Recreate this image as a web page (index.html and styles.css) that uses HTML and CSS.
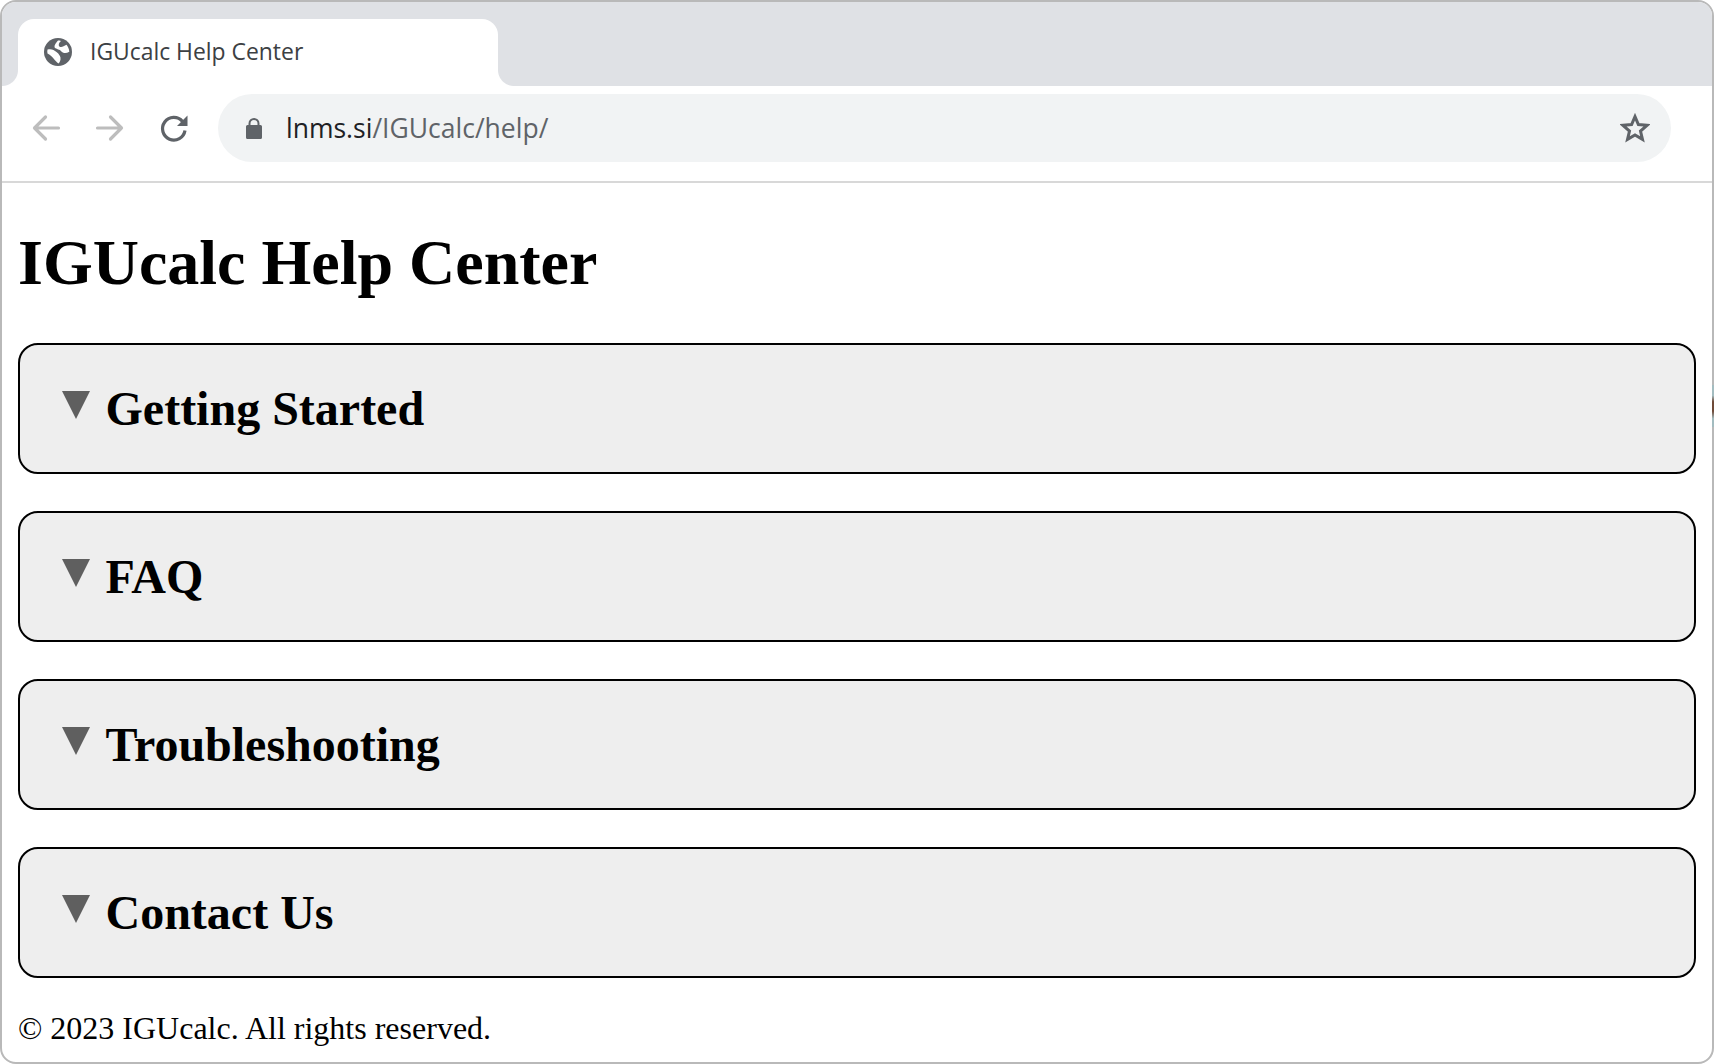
FILE: index.html
```html
<!DOCTYPE html>
<html lang="en">
<head>
<meta charset="utf-8">
<title>IGUcalc Help Center</title>
<link rel="stylesheet" href="styles.css">
</head>
<body>
<div class="window">
  <div class="tabstrip">
    <div class="tab">
      <svg class="favicon" viewBox="0 0 28 28" aria-hidden="true">
        <circle cx="14" cy="14" r="14" fill="#5f6368"/>
        <path fill="#fff" d="M3.500 11.500C7.500 10.500 10 12 12.500 14C15 16 17 18.500 16.500 21.500C16.300 23 15.500 24.500 14.500 25.500C11 23 8.500 18 3.500 15.500C3.200 14 3.200 12.800 3.500 11.500Z"/>
        <path fill="#fff" d="M14 2.500C12.500 4.500 10 7 10.500 9C11 11 15 11 17 13C19 15.500 22 15.800 25.300 13.800C25.200 11 24 8.800 22.500 6.800C19.500 8.500 17.300 10 15.300 8.500C14 7 15 4.500 17 2.900C16 2.600 15 2.500 14 2.500Z"/>
      </svg>
      <span class="tab-title">IGUcalc Help Center</span>
    </div>
  </div>
  <div class="toolbar">
    <svg class="nav-icon" viewBox="0 0 32 32" aria-hidden="true"><path d="M28.500 16H5M15.500 5 4.500 16l11 11" fill="none" stroke="#bdbdbd" stroke-width="3.200" stroke-linecap="round" stroke-linejoin="round"/></svg>
    <svg class="nav-icon" viewBox="0 0 32 32" aria-hidden="true"><path d="M3.500 16h24M16.500 5l11 11-11 11" fill="none" stroke="#bdbdbd" stroke-width="3.200" stroke-linecap="round" stroke-linejoin="round"/></svg>
    <svg class="nav-icon" viewBox="0 0 32 32" aria-hidden="true"><path d="M24.500 9.500A11.300 11.300 0 1 0 27 18.500" fill="none" stroke="#5f6368" stroke-width="3.200"/><path d="M29.500 3.500V14H19Z" fill="#5f6368"/></svg>
    <div class="omnibox">
      <svg class="lock" viewBox="0 0 16 21" aria-hidden="true"><path fill="#5f6368" fill-rule="evenodd" d="M8 0a5.500 5.500 0 0 1 5.500 5.500V7H14.500A1.500 1.500 0 0 1 16 8.500V19.500A1.500 1.500 0 0 1 14.500 21H1.500A1.500 1.500 0 0 1 0 19.500V8.500A1.500 1.500 0 0 1 1.500 7H2.500V5.500A5.500 5.500 0 0 1 8 0ZM8 2a3.500 3.500 0 0 0-3.500 3.500V7H11.500V5.500A3.500 3.500 0 0 0 8 2Z"/></svg>
      <span class="url"><span class="host">lnms.si</span>/IGUcalc/help/</span>
      <svg class="star" viewBox="0 0 30 30" aria-hidden="true"><path d="M15 3.600l3.400 8 8.600.7-6.500 5.700 2 8.400L15 21.900l-7.500 4.500 2-8.400L3 12.300l8.600-.7Z" fill="none" stroke="#5f6368" stroke-width="3"/></svg>
    </div>
  </div>
  <main class="page">
    <h1 class="title">IGUcalc Help Center</h1>
    <details class="section"><summary class="section-head"><svg class="marker" viewBox="0 0 28 28" aria-hidden="true"><path d="M0 0h28L14 28Z"/></svg><h2 class="section-title">Getting Started</h2></summary></details>
    <details class="section"><summary class="section-head"><svg class="marker" viewBox="0 0 28 28" aria-hidden="true"><path d="M0 0h28L14 28Z"/></svg><h2 class="section-title">FAQ</h2></summary></details>
    <details class="section"><summary class="section-head"><svg class="marker" viewBox="0 0 28 28" aria-hidden="true"><path d="M0 0h28L14 28Z"/></svg><h2 class="section-title">Troubleshooting</h2></summary></details>
    <details class="section"><summary class="section-head"><svg class="marker" viewBox="0 0 28 28" aria-hidden="true"><path d="M0 0h28L14 28Z"/></svg><h2 class="section-title">Contact Us</h2></summary></details>
    <footer class="footer">© 2023 IGUcalc. All rights reserved.</footer>
  </main>
</div>
<div class="edge-sliver"></div>
</body>
</html>
```

FILE: styles.css
```css
* { box-sizing: border-box; }
html, body { margin: 0; padding: 0; background: #fff; }
body { position: relative; width: 1714px; height: 1064px; overflow: hidden; }

.window {
  width: 1714px;
  height: 1064px;
  border: 2px solid #b9b9b9;
  border-radius: 16px;
  overflow: hidden;
  background: #fff;
}
.edge-sliver {
  position: absolute;
  top: 385px;
  right: 0;
  width: 2px;
  height: 42px;
  background: linear-gradient(#a3bcc0 0 25%, #6f4a38 40% 62%, #a3bcc0 80%);
}

.tabstrip {
  height: 84px;
  padding: 17px 0 0 16px;
  background: #dfe1e5;
  display: flex;
}
.tab {
  position: relative;
  width: 480px;
  height: 67px;
  padding-left: 26px;
  display: flex;
  align-items: flex-start;
  gap: 18px;
  background: #fff;
  border-radius: 16px 16px 0 0;
}
.tab::before, .tab::after {
  content: "";
  position: absolute;
  bottom: 0;
  width: 16px;
  height: 16px;
}
.tab::before {
  left: -16px;
  background: radial-gradient(circle at 0 0, #dfe1e5 15.500px, #fff 16.500px);
}
.tab::after {
  right: -16px;
  background: radial-gradient(circle at 100% 0, #dfe1e5 15.500px, #fff 16.500px);
}
.favicon { width: 28px; height: 28px; margin-top: 19px; flex: none; }
.tab-title {
  font: 400 22.900px/30px "Open Sans", sans-serif;
  color: #3c4043;
  margin-top: 18px;
  white-space: nowrap;
}

.toolbar {
  height: 97px;
  padding: 8px 41px 0 28px;
  border-bottom: 2px solid #d8d8d8;
  display: flex;
  align-items: flex-start;
  gap: 32px;
}
.nav-icon { width: 32px; height: 32px; margin-top: 18px; flex: none; }
.omnibox {
  flex: 1;
  height: 68px;
  margin-left: -4px;
  padding: 0 19px 0 28px;
  border-radius: 34px;
  background: #f1f3f4;
  display: flex;
  align-items: center;
}
.lock { width: 16px; height: 21px; flex: none; }
.url {
  flex: 1;
  margin-left: 24px;
  font: 400 26.500px/34px "Open Sans", sans-serif;
  color: #5f6368;
  white-space: nowrap;
}
.host { color: #202124; }
.star { width: 30px; height: 30px; flex: none; margin-right: 2px; }

.page {
  padding: 0 16px;
  font-family: "Liberation Serif", serif;
  color: #000;
}
.title {
  margin: 0 0 43px;
  padding-top: 43px;
  font: 700 64px/74px "Liberation Serif", serif;
}
.section {
  height: 131px;
  margin-bottom: 37px;
  border: 2px solid #000;
  border-radius: 20px;
  background: #eee;
}
.section-head {
  display: flex;
  align-items: flex-start;
  padding: 36px 0 0 42px;
  list-style: none;
}
.marker { width: 28px; height: 28px; margin: 10px 15.500px 0 0; fill: #5f5f5f; flex: none; }
.section-title {
  margin: 0;
  font: 700 48px/55px "Liberation Serif", serif;
}
.footer {
  margin-top: -5px;
  font: 400 32px/37px "Liberation Serif", serif;
}
```
